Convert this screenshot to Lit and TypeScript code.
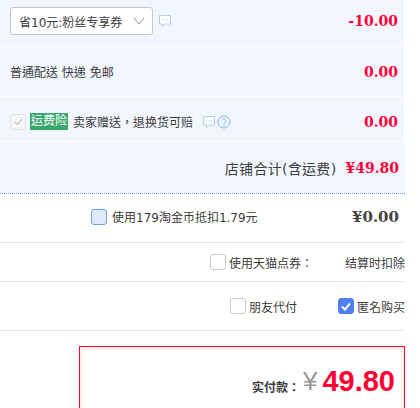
import { LitElement, html, css } from "lit";
import { customElement } from "lit/decorators.js";

const bubble = html`<svg class="bubble" viewBox="0 0 14 14" width="14" height="14"><path d="M1.5 1.5h11v8.5H7l-2.5 2.5V10h-3z" fill="#fff" stroke="#a9d3f2" stroke-width="1"/><path d="M4 5.5h1M6.5 5.5h1M9 5.5h1" stroke="#a9d3f2" stroke-width="1"/></svg>`;

@customElement("app-root")
export class AppRoot extends LitElement {
  static styles = css`
    :host { display: block; width: 420px; height: 408px; overflow: hidden; background: #fff; font-family: "DejaVu Sans", "Noto Sans CJK TC", sans-serif; font-size: 12px; color: #3c3c3c; }
    .wrap { width: 405px; }
    .row { display: flex; align-items: center; justify-content: space-between; box-sizing: border-box; width: 404px; background: #f2f7ff; padding-right: 6px; border-bottom: 1px solid #fff; }
    .r1 { height: 47px; padding: 0 6px 4px 10px; }
    .r2 { height: 50px; padding-left: 10px; }
    .r3 { height: 45px; padding: 5px 6px 0 10px; }
    .r4 { height: 51px; width: 405px; justify-content: flex-end; border-bottom: 0; font-size: 14px; gap: 9px; }
    .r4 span:first-child { letter-spacing: 0.3px; }
    .left { display: flex; align-items: center; }
    .select { width: 143px; height: 28px; box-sizing: border-box; background: #fff; border: 1px solid #c4c6cf; border-radius: 3px; display: flex; align-items: center; justify-content: space-between; padding: 0 7px 0 8px; margin-right: 5px; }
    .price { font-family: "DejaVu Serif", serif; font-weight: bold; font-size: 14px; color: #ff0036; letter-spacing: 0; }
    .box { width: 16px; height: 16px; box-sizing: border-box; border: 1px solid #c9c9d2; border-radius: 3px; background: #fff; display: flex; align-items: center; justify-content: center; flex: none; }
    .disabled { background: #f7f7f7; border-color: #e2e2e2; margin-right: 4px; }
    .tag { background: #3aa76d; color: #fff; height: 17px; line-height: 17px; width: 38px; text-align: center; margin-right: 5px; }
    .gap { width: 9px; }
    .q { margin-left: 1px; }
    .bubble { flex: none; }
    .dot { border-bottom: 1px dotted #d2d2d2; display: flex; align-items: center; box-sizing: border-box; }
    .blue-line { height: 1px; border-bottom-color: #6f9fe8; }
    .coin-row { height: 49px; padding: 0 6px 3px 91px; justify-content: space-between; }
    .coin-main { display: flex; align-items: center; gap: 5px; }
    .coin-box { background: #dfe9ff; border-color: #6b9cf8; }
    .amt { font-family: "DejaVu Serif", serif; font-weight: bold; font-size: 15px; color: #444; }
    .tm { height: 39px; justify-content: flex-end; }
    .tm .box { margin-right: 3px; }
    .tm .lab { width: 135px; display: flex; align-items: center; }
    .f { height: 49px; justify-content: flex-end; }
    .item { display: flex; align-items: center; gap: 3px; }
    .item + .item { margin-left: 41px; }
    .on { background: #4e80f5; border-color: #4e80f5; }
    .pay { margin: 15px 0 0 79px; width: 326px; height: 80px; box-sizing: border-box; border: 1px solid #ff0036; display: flex; }
    .pay-in { flex: 1; border: 3px solid #fff0e8; border-bottom: 0; display: flex; justify-content: flex-end; align-items: flex-start; padding: 16px 6px 0 0; }
    .pay-l { font-weight: bold; font-size: 12px; margin-top: 12px; margin-right: 3px; }
    .yen { font-size: 26px; color: #999; line-height: 30px; margin-right: 5px; font-family: "Liberation Sans", sans-serif; }
    .big { font-size: 29px; line-height: 30px; font-weight: bold; color: #ff0036; font-family: "Liberation Sans", sans-serif; }
  `;
  render() {
    return html`<div class="wrap">
      <div class="row r1">
        <div class="left">
          <div class="select"><span>省10元:粉丝专享券</span><svg width="12" height="8" viewBox="0 0 12 8"><path d="M.8.8 6 7l5.2-6.2" fill="none" stroke="#8a8f99"/></svg></div>
          ${bubble}
        </div>
        <span class="price">-10.00</span>
      </div>
      <div class="row r2"><span>普通配送 快递 免邮</span><span class="price">0.00</span></div>
      <div class="row r3">
        <div class="left">
          <div class="box disabled"><svg width="9" height="8" viewBox="0 0 9 8"><path d="M1 4l2.5 2.5L8 1" fill="none" stroke="#c9c9c9" stroke-width="1.5"/></svg></div>
          <span class="tag">运费险</span>
          <span>卖家赠送，退换货可赔</span>
          <span class="gap"></span>${bubble}
          <svg class="q" width="14" height="14" viewBox="0 0 14 14"><circle cx="7" cy="7" r="6" fill="none" stroke="#6cb8ec"/><path d="M5 5.4a2 2 0 1 1 3 1.8c-.7.4-1 .8-1 1.6" fill="none" stroke="#6cb8ec"/><circle cx="7" cy="10.5" r=".8" fill="#6cb8ec"/></svg>
        </div>
        <span class="price">0.00</span>
      </div>
      <div class="row r4"><span>店铺合计(含运费)</span><span class="price">¥49.80</span></div>
      <div class="dot blue-line"></div>
      <div class="dot coin-row">
        <div class="coin-main"><span class="box coin-box"></span><span>使用179淘金币抵扣1.79元</span></div>
        <span class="amt">¥0.00</span>
      </div>
      <div class="dot tm"><div class="lab"><span class="box"></span><span>使用天猫点券：</span></div><span>结算时扣除</span></div>
      <div class="dot f">
        <div class="item"><span class="box"></span>朋友代付</div>
        <div class="item"><span class="box on"><svg width="10" height="9" viewBox="0 0 10 9"><path d="M1 4.5l3 3L9 1.5" fill="none" stroke="#fff" stroke-width="2"/></svg></span>匿名购买</div>
      </div>
      <div class="pay"><div class="pay-in"><span class="pay-l">实付款：</span><span class="yen">¥</span><span class="big">49.80</span></div></div>
    </div>`;
  }
}
